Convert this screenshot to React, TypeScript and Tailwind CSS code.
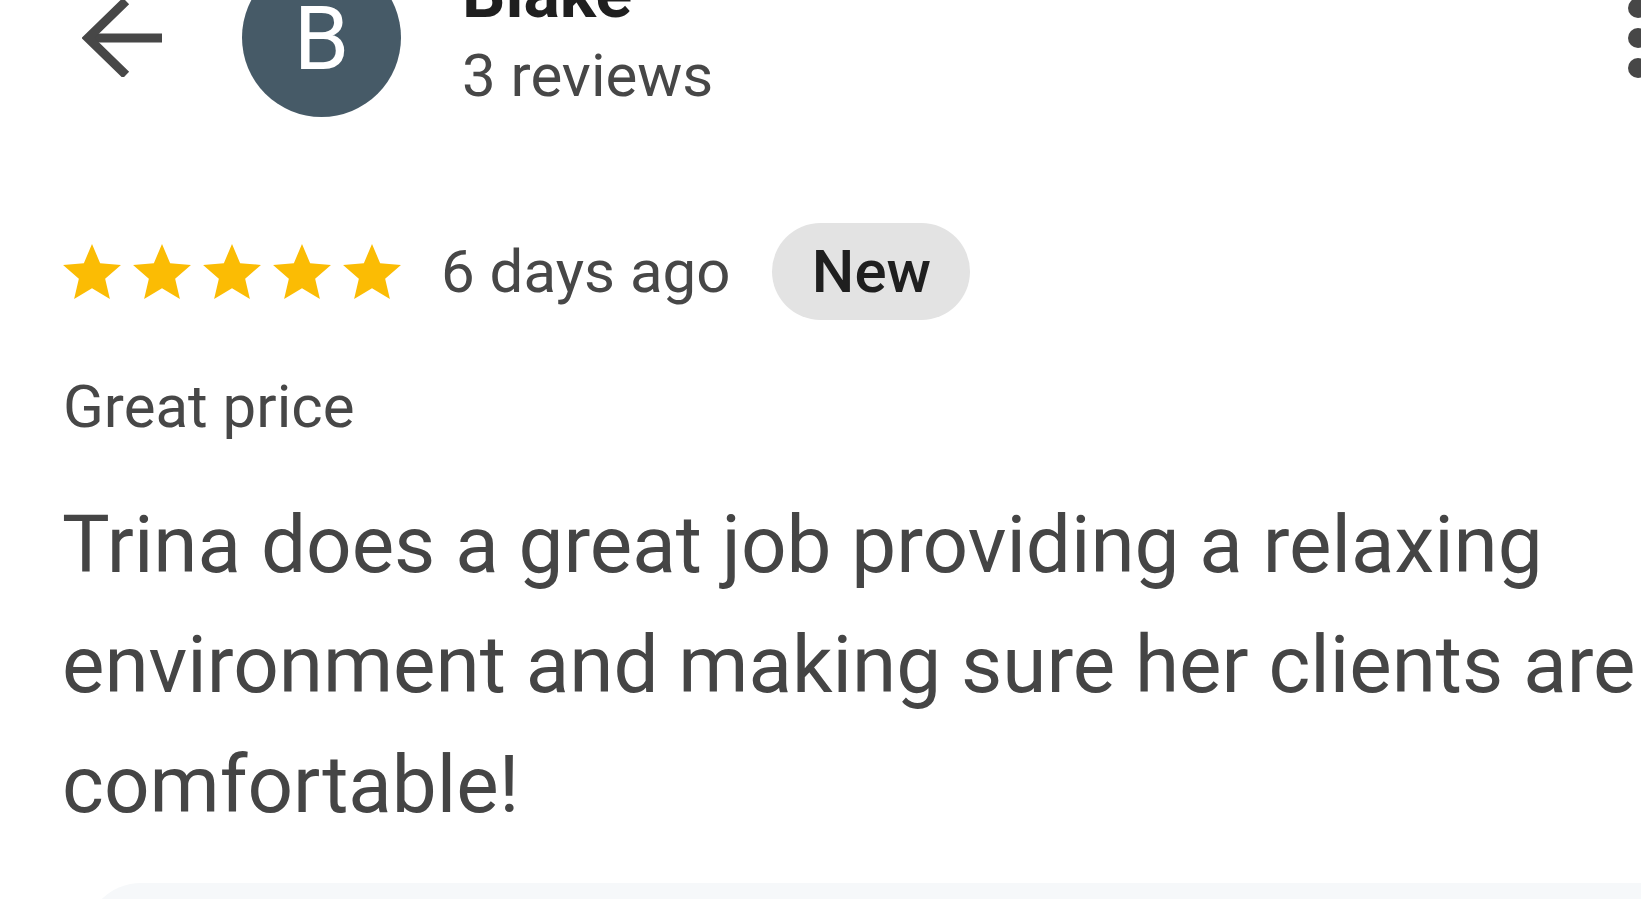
import React from "react";

const Star = () => (
  <svg width="58" height="55" viewBox="2 2 20 19" className="shrink-0">
    <path
      d="M12 17.27L18.18 21l-1.64-7.03L22 9.24l-7.19-.61L12 2 9.19 8.63 2 9.24l5.46 4.73L5.82 21z"
      fill="#FBBC04"
    />
  </svg>
);

export default function App() {
  return (
    <div
      className="w-full h-[899px] overflow-hidden bg-white flex flex-col"
      style={{ fontFamily: "Roboto, 'Noto Sans', Arial, sans-serif" }}
    >
      {/* Header */}
      <div className="mt-[-42px] h-[159px] flex items-start shrink-0">
        <svg
          width="80"
          height="78"
          viewBox="0 0 80 78"
          className="mt-[41px] ml-[82px] shrink-0"
        >
          <path d="M80 39H6" stroke="#474747" strokeWidth="9" fill="none" />
          <path
            d="M44 2L6 39L44 76"
            stroke="#474747"
            strokeWidth="9"
            fill="none"
            strokeLinejoin="miter"
          />
        </svg>
        <div className="ml-[80px] w-[159px] h-[159px] rounded-full bg-[#465a67] flex items-center justify-center shrink-0">
          <span className="text-white text-[89px] leading-[100px] mt-[2px]">B</span>
        </div>
        <div className="ml-[61px] mt-[1px] flex flex-col">
          <div className="text-[68px] leading-[70px] font-bold text-[#1f1f1f]">Blake</div>
          <div className="mt-[12px] text-[60px] leading-[70px] text-[#474747]">3 reviews</div>
        </div>
        <div className="ml-auto mr-[-7px] mt-[40px] flex flex-col gap-[10px]">
          <div className="w-[20px] h-[20px] rounded-full bg-[#474747]" />
          <div className="w-[20px] h-[20px] rounded-full bg-[#474747]" />
          <div className="w-[20px] h-[20px] rounded-full bg-[#474747]" />
        </div>
      </div>

      {/* Rating row */}
      <div className="mt-[106px] h-[97px] flex items-center pl-[63px] shrink-0">
        <div className="flex items-center gap-[12px]">
          <Star />
          <Star />
          <Star />
          <Star />
          <Star />
        </div>
        <span className="ml-[40px] text-[60px] leading-none text-[#474747] whitespace-nowrap">
          6 days ago
        </span>
        <div className="ml-[42px] w-[198px] h-[97px] rounded-full bg-[#e3e3e3] flex items-center justify-center">
          <span className="text-[60px] leading-none font-medium text-[#1f1f1f]">New</span>
        </div>
      </div>

      {/* Title */}
      <div className="mt-[52px] pl-[63px] text-[60px] leading-[70px] text-[#474747] shrink-0">
        Great price
      </div>

      {/* Body */}
      <div className="mt-[43px] pl-[62px] text-[80px] leading-[120px] text-[#454545] shrink-0 whitespace-nowrap">
        <div>Trina does a great job providing a relaxing</div>
        <div>environment and making sure her clients are</div>
        <div>comfortable!</div>
      </div>

      {/* Next card peeking */}
      <div className="mt-[38px] ml-[85px] h-[60px] rounded-tl-[56px] bg-[#f6f8fa] shrink-0" />
    </div>
  );
}
